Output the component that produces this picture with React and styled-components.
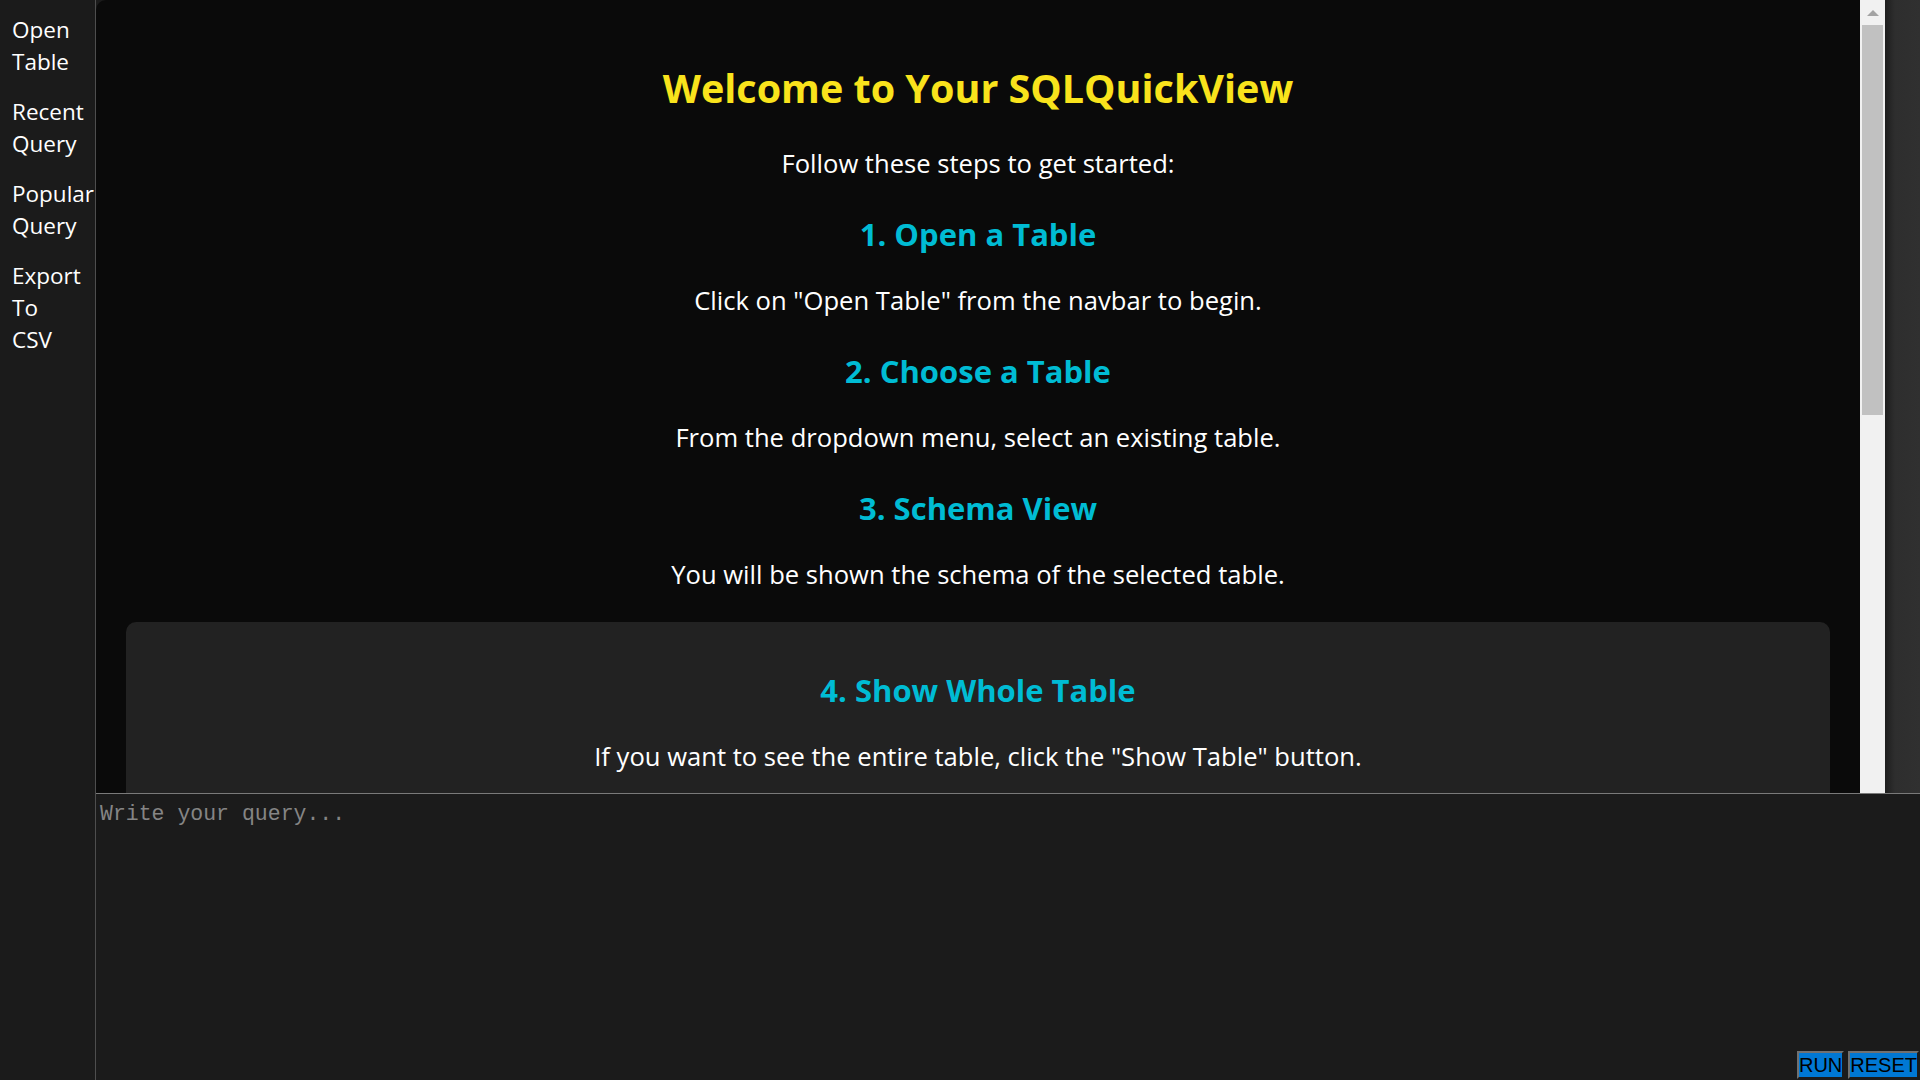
import styled, { createGlobalStyle } from "styled-components";

const GlobalStyle = createGlobalStyle`
  html, body {
    margin: 0;
    padding: 0;
    height: 100%;
    overflow: hidden;
    background-color: #1b1b1b;
  }

  #root {
    height: 100%;
  }
`;

const navItems = ["Open Table", "Recent Query", "Popular Query", "Export To CSV"];

const steps = [
  {
    title: "1. Open a Table",
    text: 'Click on "Open Table" from the navbar to begin.',
  },
  {
    title: "2. Choose a Table",
    text: "From the dropdown menu, select an existing table.",
  },
  {
    title: "3. Schema View",
    text: "You will be shown the schema of the selected table.",
  },
];

export default function App() {
  return (
    <>
      <GlobalStyle />
      <StyledPage>
        <StyledSidebar>
          {navItems.map((item) => (
            <StyledNavItem key={item}>{item}</StyledNavItem>
          ))}
        </StyledSidebar>
        <StyledWorkspace>
          <StyledTop>
            <StyledMain>
              <StyledContent>
                <StyledTitle>Welcome to Your SQLQuickView</StyledTitle>
                <StyledText>Follow these steps to get started:</StyledText>
                {steps.map((step) => (
                  <div key={step.title}>
                    <StyledStepTitle>{step.title}</StyledStepTitle>
                    <StyledText>{step.text}</StyledText>
                  </div>
                ))}
                <StyledPanel>
                  <StyledStepTitle>4. Show Whole Table</StyledStepTitle>
                  <StyledText>
                    If you want to see the entire table, click the "Show Table"
                    button.
                  </StyledText>
                </StyledPanel>
              </StyledContent>
            </StyledMain>
            <StyledScrollTrack>
              <StyledScrollButton>
                <StyledArrowUp />
              </StyledScrollButton>
              <StyledScrollThumb />
            </StyledScrollTrack>
            <StyledAside />
          </StyledTop>
          <StyledEditor>
            <StyledQueryInput placeholder="Write your query..." />
            <StyledButtonBar>
              <StyledActionButton>RUN</StyledActionButton>
              <StyledActionButton>RESET</StyledActionButton>
            </StyledButtonBar>
          </StyledEditor>
        </StyledWorkspace>
      </StyledPage>
    </>
  );
}

const StyledPage = styled.div`
  display: flex;
  height: 100vh;
  font-family: "Segoe UI", "Open Sans", "Noto Sans", sans-serif;
`;

const StyledSidebar = styled.nav`
  display: flex;
  flex-direction: column;
  gap: 18px;
  width: 96px;
  flex-shrink: 0;
  padding: 14px 0 0 12px;
  box-sizing: border-box;
  background-color: #1b1b1b;
  border-right: 1px solid #4e4e4e;
`;

const StyledNavItem = styled.a`
  width: min-content;
  color: #ffffff;
  font-size: 22.5px;
  line-height: 32px;
  cursor: pointer;
`;

const StyledWorkspace = styled.div`
  flex: 1;
  display: flex;
  flex-direction: column;
  min-width: 0;
`;

const StyledTop = styled.div`
  display: flex;
  height: 793px;
  flex-shrink: 0;
`;

const StyledMain = styled.main`
  flex: 1;
  overflow: hidden;
  background-color: #0a0a0a;
  border-top-left-radius: 10px;
`;

const StyledContent = styled.div`
  padding: 64px 30px 30px;
  text-align: center;
`;

const StyledTitle = styled.h1`
  margin: 0 0 36px;
  color: #f9e31c;
  font-size: 39.5px;
  line-height: 48px;
  font-weight: bold;
`;

const StyledStepTitle = styled.h2`
  margin: 34px 0 31px;
  color: #00bcd4;
  font-size: 31px;
  line-height: 40px;
  font-weight: bold;
`;

const StyledText = styled.p`
  margin: 0;
  color: #ffffff;
  font-size: 25.6px;
  line-height: 32px;
`;

const StyledPanel = styled.section`
  margin-top: 31px;
  padding: 14px 20px 30px;
  min-height: 860px;
  box-sizing: border-box;
  background-color: #222222;
  border-radius: 10px;
`;

const StyledScrollTrack = styled.div`
  display: flex;
  flex-direction: column;
  width: 25px;
  flex-shrink: 0;
  background-color: #f1f1f1;
`;

const StyledScrollButton = styled.div`
  display: flex;
  justify-content: center;
  padding-top: 10px;
  height: 25px;
  box-sizing: border-box;
`;

const StyledArrowUp = styled.span`
  width: 0;
  height: 0;
  border-left: 6px solid transparent;
  border-right: 6px solid transparent;
  border-bottom: 6px solid #a3a3a3;
`;

const StyledScrollThumb = styled.div`
  height: 390px;
  margin: 0 2px;
  background-color: #c1c1c1;
`;

const StyledAside = styled.aside`
  width: 35px;
  flex-shrink: 0;
  background: linear-gradient(to right, #1e1e1e, #2e2e2e 10px, #303030);
`;

const StyledEditor = styled.div`
  position: relative;
  flex: 1;
  border-top: 1px solid #7a7a7a;
  background-color: #1b1b1b;
`;

const StyledQueryInput = styled.textarea`
  display: block;
  width: 100%;
  height: 100%;
  padding: 8px 4px;
  box-sizing: border-box;
  background: transparent;
  border: none;
  outline: none;
  resize: none;
  color: #dddddd;
  font-family: "Liberation Mono", "DejaVu Sans Mono", monospace;
  font-size: 21.5px;

  &::placeholder {
    color: #858585;
  }
`;

const StyledButtonBar = styled.div`
  position: absolute;
  right: 1px;
  bottom: 1px;
  display: flex;
  gap: 4px;
`;

const StyledActionButton = styled.button`
  padding: 0;
  background-color: #0078d4;
  color: #000000;
  border: 2px outset #707070;
  font-family: "Liberation Sans", Arial, sans-serif;
  font-size: 20px;
  line-height: 24px;
  cursor: pointer;
`;
